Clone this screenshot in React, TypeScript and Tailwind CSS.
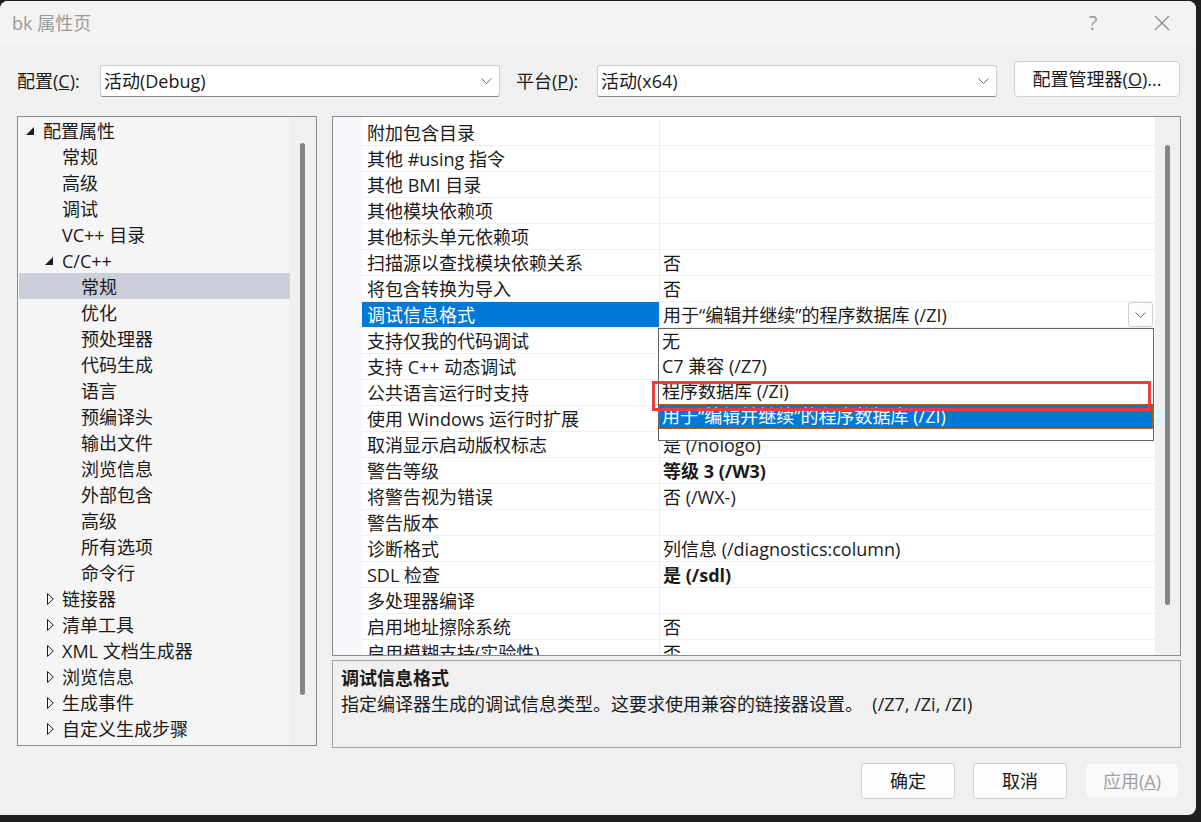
import React from 'react';

type TreeItem = { label: string; level: number; toggle?: 'open' | 'closed'; selected?: boolean };

const tree: TreeItem[] = [
  { label: '配置属性', level: 0, toggle: 'open' },
  { label: '常规', level: 1 },
  { label: '高级', level: 1 },
  { label: '调试', level: 1 },
  { label: 'VC++ 目录', level: 1 },
  { label: 'C/C++', level: 1, toggle: 'open' },
  { label: '常规', level: 2, selected: true },
  { label: '优化', level: 2 },
  { label: '预处理器', level: 2 },
  { label: '代码生成', level: 2 },
  { label: '语言', level: 2 },
  { label: '预编译头', level: 2 },
  { label: '输出文件', level: 2 },
  { label: '浏览信息', level: 2 },
  { label: '外部包含', level: 2 },
  { label: '高级', level: 2 },
  { label: '所有选项', level: 2 },
  { label: '命令行', level: 2 },
  { label: '链接器', level: 1, toggle: 'closed' },
  { label: '清单工具', level: 1, toggle: 'closed' },
  { label: 'XML 文档生成器', level: 1, toggle: 'closed' },
  { label: '浏览信息', level: 1, toggle: 'closed' },
  { label: '生成事件', level: 1, toggle: 'closed' },
  { label: '自定义生成步骤', level: 1, toggle: 'closed' },
];

type Prop = { name: string; value?: string; bold?: boolean; selected?: boolean };

const props: Prop[] = [
  { name: '附加包含目录' },
  { name: '其他 #using 指令' },
  { name: '其他 BMI 目录' },
  { name: '其他模块依赖项' },
  { name: '其他标头单元依赖项' },
  { name: '扫描源以查找模块依赖关系', value: '否' },
  { name: '将包含转换为导入', value: '否' },
  { name: '调试信息格式', value: '用于“编辑并继续”的程序数据库 (/ZI)', selected: true },
  { name: '支持仅我的代码调试' },
  { name: '支持 C++ 动态调试' },
  { name: '公共语言运行时支持' },
  { name: '使用 Windows 运行时扩展' },
  { name: '取消显示启动版权标志', value: '是 (/nologo)' },
  { name: '警告等级', value: '等级 3 (/W3)', bold: true },
  { name: '将警告视为错误', value: '否 (/WX-)' },
  { name: '警告版本' },
  { name: '诊断格式', value: '列信息 (/diagnostics:column)' },
  { name: 'SDL 检查', value: '是 (/sdl)', bold: true },
  { name: '多处理器编译' },
  { name: '启用地址擦除系统', value: '否' },
  { name: '启用模糊支持(实验性)', value: '否' },
];

const options = ['无', 'C7 兼容 (/Z7)', '程序数据库 (/Zi)', '用于“编辑并继续”的程序数据库 (/ZI)'];

function Chevron() {
  return (
    <svg width="11" height="6" viewBox="0 0 11 6" className="shrink-0">
      <polyline points="0.5,0.5 5.5,5.5 10.5,0.5" fill="none" stroke="#6b6b6b" strokeWidth="1" />
    </svg>
  );
}

function Toggle({ kind }: { kind: 'open' | 'closed' }) {
  if (kind === 'open') {
    return (
      <svg width="8" height="8" viewBox="0 0 8 8">
        <polygon points="8,0 8,8 0,8" fill="#1e1e1e" />
      </svg>
    );
  }
  return (
    <svg width="7" height="12" viewBox="0 0 7 12">
      <polygon points="0.5,0.5 6.3,6 0.5,11.5" fill="none" stroke="#1e1e1e" strokeWidth="1" />
    </svg>
  );
}

function TreeRow({ item }: { item: TreeItem }) {
  let pad = 'pl-[62px]';
  if (item.level === 0) pad = 'pl-[7px]';
  else if (item.level === 1 && item.toggle === 'open') pad = 'pl-[26px]';
  else if (item.level === 1 && item.toggle === 'closed') pad = 'pl-[28px]';
  else if (item.level === 1) pad = 'pl-[43px]';
  return (
    <div className={`h-[26px] flex items-center pt-[2px] ${pad} ${item.selected ? 'bg-[#cccedb]' : ''}`}>
      {item.toggle && (
        <div className={`${item.toggle === 'closed' ? 'w-[15px]' : 'w-[17px]'} flex items-center`}>
          <Toggle kind={item.toggle} />
        </div>
      )}
      <span className="whitespace-nowrap">{item.label}</span>
    </div>
  );
}

function Combo({ value }: { value: string }) {
  return (
    <div className="w-[400px] h-[32px] bg-white border border-[#cccccc] border-b-[#8a8a8a] rounded-[3px] flex items-center pl-[3px] pr-[7px]">
      <span className="flex-1">{value}</span>
      <Chevron />
    </div>
  );
}

export default function App() {
  return (
    <div className="w-[1201px] h-[822px] bg-[#1f1f1f] pt-[1px] overflow-hidden font-['Open_Sans','Noto_Sans_CJK_SC',sans-serif] text-[18px] leading-[26px] text-[#1a1a1a]">
      <div className="w-[1196px] h-[814px] bg-[#f0f0f0] rounded-tl-[8px] rounded-r-[8px] flex flex-col overflow-hidden">
        {/* title bar */}
        <div className="h-[43px] bg-[#f3f3f3] flex items-center pl-[12px] text-[#9a9a9a]">
          <span className="flex-1">bk 属性页</span>
          <span className="w-[20px] text-center text-[20px]">?</span>
          <div className="w-[93px] flex justify-end pr-[26px]">
            <svg width="16" height="16" viewBox="0 0 16 16">
              <path d="M1 1L15 15M15 1L1 15" stroke="#8a8a8a" strokeWidth="1.2" />
            </svg>
          </div>
        </div>

        {/* configuration row */}
        <div className="h-[53px] flex items-end pl-[17px]">
          <div className="w-[83px] h-[32px] flex items-center">
            配置(<span className="underline">C</span>):
          </div>
          <Combo value="活动(Debug)" />
          <div className="ml-[16px] w-[81px] h-[32px] flex items-center">
            平台(<span className="underline">P</span>):
          </div>
          <Combo value="活动(x64)" />
          <div className="ml-[17px] w-[166px] h-[36px] bg-[#fdfdfd] border border-[#d0d0d0] rounded-[4px] flex items-center justify-center">
            配置管理器(<span className="underline">O</span>)...
          </div>
        </div>

        {/* main */}
        <div className="mt-[19px] flex pl-[17px] gap-[15px]">
          {/* tree */}
          <div className="w-[300px] h-[630px] border border-[#8c8c8c] bg-[#f5f5f5] flex overflow-hidden">
            <div className="flex-1 pl-[1px]">
              {tree.map((t, i) => (
                <TreeRow key={i} item={t} />
              ))}
            </div>
            <div className="w-[26px] bg-[#f0f0f0] pt-[26px] pl-[10px]">
              <div className="w-[5px] h-[552px] rounded-full bg-[#858585]" />
            </div>
          </div>

          {/* right column */}
          <div className="w-[849px] flex flex-col gap-[4px]">
            <div className="h-[540px] border border-[#8c8c8c] flex overflow-hidden">
              <div className="w-[29px] bg-[#f5f7fa]" />
              <div className="flex-1 bg-white pt-[3px] relative">
                {props.map((p, i) => (
                  <div key={i} className="h-[26px] flex border-b border-[#efefef]">
                    <div
                      className={`w-[298px] pl-[5px] whitespace-nowrap border-r border-[#efefef] ${
                        p.selected ? 'bg-[#0078d7] text-white' : ''
                      }`}
                    >
                      {p.name}
                    </div>
                    <div className={`flex-1 pl-[3px] flex items-center whitespace-nowrap ${p.bold ? 'font-bold' : ''}`}>
                      <span className="flex-1">{p.value}</span>
                      {p.selected && (
                        <div className="w-[25px] h-[25px] mr-[2px] bg-[#fcfcfc] border border-[#cfcfcf] rounded-[3px] flex items-center justify-center">
                          <Chevron />
                        </div>
                      )}
                    </div>
                  </div>
                ))}

                {/* open dropdown list */}
                <div className="absolute left-[296px] top-[211px] w-[496px] bg-white border border-[#646464] pb-[11px]">
                  {options.map((o, i) => (
                    <div
                      key={i}
                      className={`h-[25px] leading-[25px] pl-[3px] whitespace-nowrap ${
                        i === 3 ? 'bg-[#0078d7] text-white outline outline-1 outline-dotted outline-[#b86a1e] -outline-offset-1' : ''
                      }`}
                    >
                      {o}
                    </div>
                  ))}
                </div>

                {/* highlight annotation */}
                <div className="absolute left-[290px] top-[264px] w-[499px] h-[30px] border-[3px] border-[#ee3b3b]" />
              </div>
              <div className="w-[25px] bg-[#f0f0f0] pt-[28px] pl-[10px]">
                <div className="w-[5px] h-[460px] rounded-full bg-[#858585]" />
              </div>
            </div>

            {/* description */}
            <div className="h-[88px] border border-[#a0a0a0] pl-[8px] pt-[4px]">
              <div className="font-bold">调试信息格式</div>
              <div className="whitespace-pre">指定编译器生成的调试信息类型。这要求使用兼容的链接器设置。  (/Z7, /Zi, /ZI)</div>
            </div>
          </div>
        </div>

        {/* buttons */}
        <div className="mt-[15px] flex justify-end pr-[17px] gap-[18px]">
          <div className="w-[94px] h-[36px] bg-[#fdfdfd] border border-[#d0d0d0] rounded-[4px] flex items-center justify-center">
            确定
          </div>
          <div className="w-[94px] h-[36px] bg-[#fdfdfd] border border-[#d0d0d0] rounded-[4px] flex items-center justify-center">
            取消
          </div>
          <div className="w-[94px] h-[36px] bg-[#f9f9f9] border border-[#ececec] rounded-[4px] flex items-center justify-center text-[#a0a0a0]">
            应用(<span className="underline">A</span>)
          </div>
        </div>
      </div>
    </div>
  );
}
